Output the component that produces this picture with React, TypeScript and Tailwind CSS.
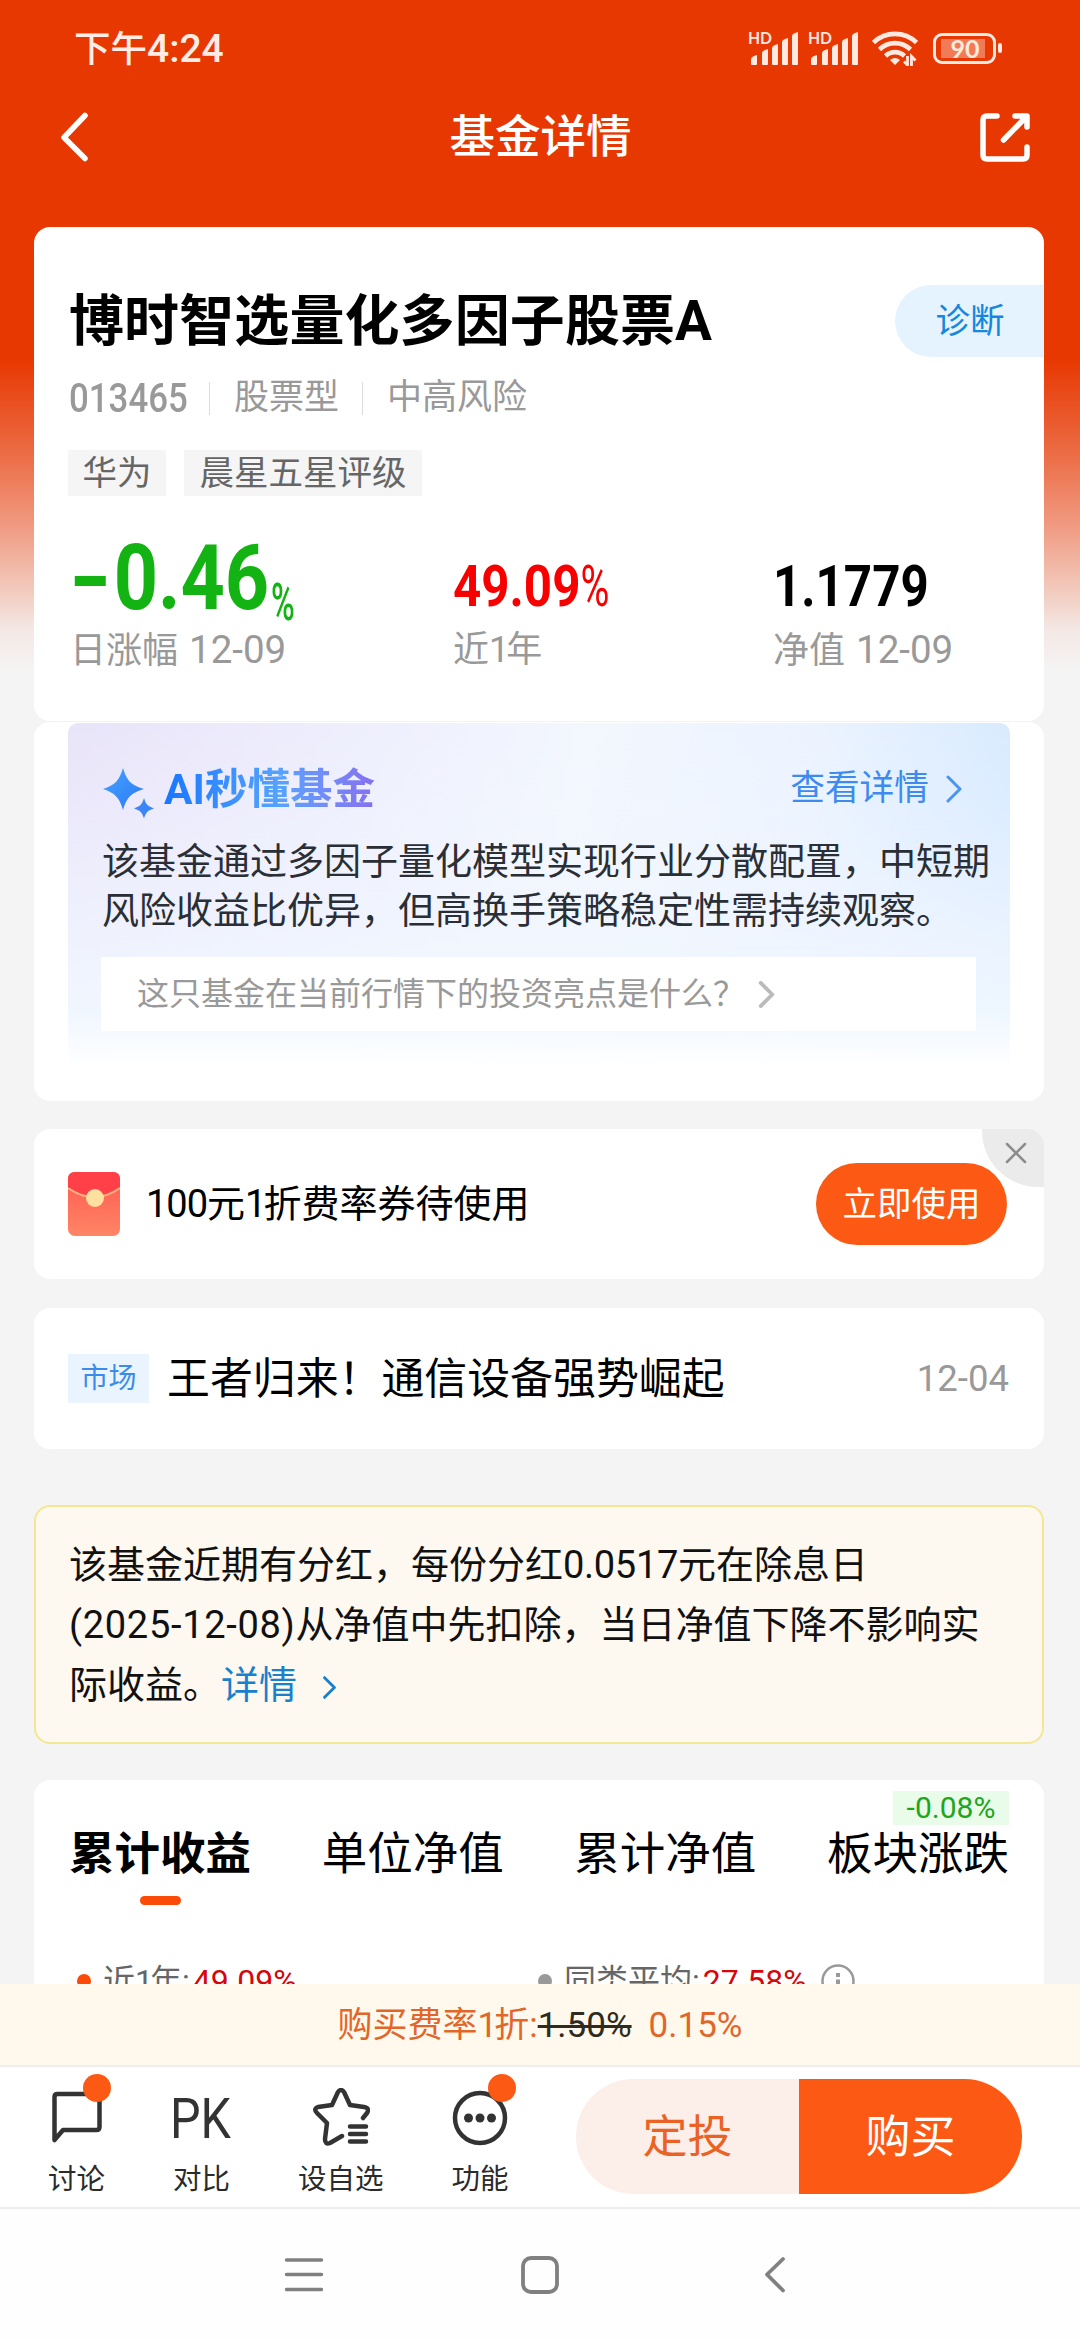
import type { ReactNode } from 'react';

const TABS = ['累计收益', '单位净值', '累计净值', '板块涨跌'];

function SignalIcon() {
  return (
    <svg className="overflow-visible" width="50" height="34" viewBox="0 0 50 34" fill="#ffe9e0">
      <text x="-1" y="13" fontSize="17" fontWeight="700" fontFamily="Lato" textLength="24" lengthAdjust="spacingAndGlyphs">
        HD
      </text>
      <path d="M2 33v-4q0-3 3-4l3-1v9q0 1-1 1H3q-1 0-1-1Z" />
      <path d="M13 33V22q0-2 3-3l3-1v15q0 1-1 1h-4q-1 0-1-1Z" />
      <path d="M23 33V17q0-2 3-3l3-1v20q0 1-1 1h-4q-1 0-1-1Z" />
      <path d="M33 33V11q0-2 3-3l3-1v26q0 1-1 1h-4q-1 0-1-1Z" />
      <path d="M43 33V5q0-2 3-3l3-1v32q0 1-1 1h-4q-1 0-1-1Z" />
    </svg>
  );
}

function WifiIcon() {
  return (
    <svg width="46" height="37" viewBox="0 0 46 37" fill="none" stroke="#ffe9e0" strokeWidth="4.6">
      <path d="M1.500 12.500a31 31 0 0 1 43 0" />
      <path d="M7.500 19.500a22 22 0 0 1 31 0" />
      <path d="M13.500 26a13.500 13.500 0 0 1 19 0" />
      <path d="M18 30q5-4 10 0l-5 5Z" fill="#ffe9e0" stroke="none" />
      <path d="M35.500 26v10M35.500 35l-3.500-3.500M39.500 36V26.500l4 4" strokeWidth="2.800" />
    </svg>
  );
}

function BatteryIcon() {
  return (
    <div className="flex items-center gap-[2px]">
      <div className="flex h-[31px] w-[63px] items-center rounded-[9px] border-[3px] border-[#ffe9e0] px-[5px]">
        <div className="flex h-[19px] w-[44px] items-center justify-center bg-[#f27b57]">
          <span className="pl-1 font-['Lato'] text-[25px] leading-none font-bold text-[#ffeadb]">90</span>
        </div>
      </div>
      <div className="h-[10px] w-[4px] rounded-sm bg-[#ffe9e0]" />
    </div>
  );
}

function Chevron({ className, width = 4 }: { className: string; width?: number }) {
  return (
    <svg className={className} viewBox="0 0 16 28" fill="none" stroke="currentColor" strokeWidth={width} strokeLinecap="round" strokeLinejoin="round">
      <path d="M2 2l12 12L2 26" />
    </svg>
  );
}

function ToolItem({ label, dot, children }: { label: string; dot?: boolean; children: ReactNode }) {
  return (
    <div className="flex flex-col items-center">
      <div className="relative mt-[21px] h-[58px]">
        {children}
        {dot && <span className="absolute -top-[14px] right-[-8px] size-[28px] rounded-full bg-[#fc5a14]" />}
      </div>
      <span className="mt-[14px] text-[28.500px] leading-[40px] whitespace-nowrap text-[#2b2b2b]">{label}</span>
    </div>
  );
}

function StatusBar() {
  return (
    <div className="flex h-[96px] items-center justify-between pr-[78px] pl-[74px]">
      <span className="pt-[2px] text-[36.500px] font-medium text-[#ffece4]">
        下午<span className="text-[39px]">4:24</span>
      </span>
      <div className="flex items-center">
        <SignalIcon />
        <span className="w-[10px]" />
        <SignalIcon />
        <span className="w-[13px]" />
        <WifiIcon />
        <span className="w-[15px]" />
        <BatteryIcon />
      </div>
    </div>
  );
}

function TitleBar() {
  return (
    <div className="flex h-[131px] items-start justify-between pt-[15px] pr-[50px] pl-[60px] text-white">
      <svg className="mt-[1px] h-[50px] w-[49px]" viewBox="0 0 49 50" fill="none" stroke="currentColor" strokeWidth="5.500" strokeLinecap="round" strokeLinejoin="round">
        <path d="M25 3.500L4 25.500l21 21" />
      </svg>
      <h1 className="mt-[2px] pr-[8px] text-[45.500px] leading-[50px] font-medium">基金详情</h1>
      <svg className="mt-[1px] h-[50px] w-[50px]" viewBox="0 0 50 50" fill="none" stroke="currentColor" strokeWidth="5.500" strokeLinecap="round" strokeLinejoin="round">
        <path d="M17 4H7q-4 0-4 4v35q0 4 4 4h36q4 0 4-4V35" />
        <path d="M35 4h12v11M46 5L23.500 28" />
      </svg>
    </div>
  );
}

function FundSummary() {
  return (
    <section className="h-[494px] rounded-[16px] bg-white">
      <div className="flex items-center justify-between pt-[58px]">
        <h2 className="pl-[35px] text-[55px] leading-[72px] font-bold tracking-[0.100px] text-black">
          博时智选量化多因子股票A
        </h2>
        <button type="button" className="h-[72px] w-[149px] rounded-l-full bg-[#e5f3ff] pl-px text-[34.500px] leading-[71px] text-[#1487e0]">
          诊断
        </button>
      </div>

      <div className="mt-[16px] flex h-[50px] items-center pl-[35px] text-[35px] leading-[50px] text-[#999]">
        <span className="w-[140px] origin-left scale-x-[0.850] text-[41px] font-medium">013465</span>
        <span className="h-[33px] w-px bg-[#ddd]" />
        <span className="w-[152px] pl-[24px]">股票型</span>
        <span className="h-[33px] w-px bg-[#ddd]" />
        <span className="pl-[24px]">中高风险</span>
      </div>

      <div className="mt-[27px] flex gap-[18px] pl-[34px] text-[34.500px] leading-[46px] text-[#666]">
        <span className="h-[46px] w-[98px] bg-[#f5f5f5] text-center">华为</span>
        <span className="h-[46px] w-[238px] bg-[#f5f5f5] text-center">晨星五星评级</span>
      </div>

      <div className="mt-[34px] flex pl-[38px]">
        <div className="w-[381px]">
          <div className="flex h-[96px] items-end text-[#12b312]">
            <span className="flex w-[199px] origin-left scale-x-[0.850] text-[91px] leading-[95px] font-bold whitespace-nowrap">
              <span className="-ml-[4px] w-[53px] shrink-0">
                <span className="inline-block origin-left scale-x-[1.450]">-</span>
              </span>
              <span>0.46</span>
            </span>
            <span className="origin-left scale-x-[0.620] pb-px text-[52px] leading-[44px] font-medium">%</span>
          </div>
          <div className="-ml-[2px] text-[36px] leading-[48px] text-[#999]">
            日涨幅<span className="pl-[11px] text-[38.500px]">12-09</span>
          </div>
        </div>
        <div className="w-[320px]">
          <div className="flex h-[96px] origin-left scale-x-[0.850] items-end text-[58px] leading-[79px] font-bold text-[#f80000]">
            49.09<span className="inline-block origin-left scale-x-[0.800] font-normal">%</span>
          </div>
          <div className="text-[36px] leading-[48px] text-[#999]">
            近<span className="tracking-[-3px]">1</span>年
          </div>
        </div>
        <div>
          <div className="flex h-[96px] origin-left scale-x-[0.850] items-end text-[58px] leading-[79px] font-bold text-black">
            1.1779
          </div>
          <div className="text-[36px] leading-[48px] text-[#999]">
            净值<span className="pl-[11px] text-[38.500px]">12-09</span>
          </div>
        </div>
      </div>
    </section>
  );
}

function AiCard() {
  return (
    <section className="h-[380px] rounded-[16px] border-t border-[#f2f2f2] bg-white px-[34px] pt-px">
      <div className="h-[344px] rounded-t-[10px] bg-[linear-gradient(to_bottom,rgba(243,248,255,0)_0%,rgba(243,248,255,0.200)_25%,rgba(241,246,255,0.700)_60%,rgba(241,248,255,0.900)_84%,white_100%),linear-gradient(100deg,#e9e4f9_0%,#eeeefd_28%,#f3f7fe_52%,#ebf3ff_75%,#d3e8ff_100%)] px-[34px]">
        <div className="flex h-[115px] items-center pt-[16px]">
          <svg className="mt-[9px] h-[52px] w-[54px]" viewBox="0 0 54 52">
            <defs>
              <linearGradient id="spark" x1="0" y1="0" x2="1" y2="1">
                <stop offset="0" stopColor="#46a4ff" />
                <stop offset="1" stopColor="#2c78f5" />
              </linearGradient>
            </defs>
            <path fill="url(#spark)" d="M21 1C25 14 29 18 42 22C29 26 25 30 21 43C17 30 13 26 1 22C13 18 17 14 21 1Z" />
            <path fill="#3a86f8" d="M42 31C44 38 46 39 52 41.500C46 43.500 44 45 42 51.500C40 45 38 43.500 32 41.500C38 39 40 38 42 31Z" />
          </svg>
          <h3 className="mt-[3px] ml-[8px] bg-gradient-to-r from-[#1677ff] via-[#55a3ff] via-55% to-[#8570f0] bg-clip-text text-[42.500px] leading-[60px] font-bold text-transparent">
            AI秒懂基金
          </h3>
          <a className="ml-auto text-[34.700px] text-[#3d8bef]">查看详情</a>
          <Chevron className="mr-[14px] ml-[17px] h-[28px] w-[16px] text-[#4a94f2]" width={3} />
        </div>
        <p className="text-[37px] leading-[49px] whitespace-nowrap text-[#2a2e35]">
          该基金通过多因子量化模型实现行业分散配置，中短期
          <br />
          风险收益比优异，但高换手策略稳定性需持续观察。
        </p>
        <div className="mt-[21px] -ml-px flex h-[74px] w-[875px] items-center bg-white pl-[36px] text-[32px] text-[#999]">
          这只基金在当前行情下的投资亮点是什么？
          <Chevron className="ml-[13px] h-[27px] w-[17px] text-[#bbb]" />
        </div>
      </div>
    </section>
  );
}

function CouponCard() {
  return (
    <section className="relative mt-[28px] flex h-[150px] items-center overflow-hidden rounded-[16px] bg-white pr-[37px] pl-[34px]">
      <svg className="h-[64px] w-[52px]" viewBox="0 0 52 64">
        <defs>
          <linearGradient id="packet" x1="0" y1="0" x2="0" y2="1">
            <stop offset="0" stopColor="#ff5a50" />
            <stop offset="1" stopColor="#ff8566" />
          </linearGradient>
        </defs>
        <rect width="52" height="64" rx="7" fill="url(#packet)" />
        <path d="M0 16V7q0-7 7-7h38q7 0 7 7v9q-26 18-52 0Z" fill="#ff4049" />
        <path d="M0 16q26 18 52 0" fill="none" stroke="#ffb27d" strokeWidth="2" />
        <circle cx="27" cy="26" r="9" fill="#ffe0a0" />
      </svg>
      <span className="ml-[26px] text-[38px] text-black">
        <span className="tracking-[-1px]">100</span>元<span className="tracking-[-3px]">1</span>折费率券待使用
      </span>
      <button type="button" className="ml-auto h-[82px] w-[191px] rounded-full bg-[#fc5a14] text-[34.500px] leading-[80px] text-white">
        立即使用
      </button>
      <span className="absolute top-0 right-0 flex h-[58px] w-[62px] items-center justify-center rounded-bl-[56px] bg-[#ebebeb] pb-[10px] pl-[6px]">
        <svg className="size-[22px]" viewBox="0 0 22 22" stroke="#8c8c8c" strokeWidth="2.500" strokeLinecap="round">
          <path d="M2 2l18 18M20 2L2 20" />
        </svg>
      </span>
    </section>
  );
}

function NewsCard() {
  return (
    <section className="mt-[29px] flex h-[141px] items-center rounded-[16px] bg-white pr-[35px] pl-[34px]">
      <span className="h-[49px] w-[81px] bg-[#e9f4ff] text-center text-[28px] leading-[49px] text-[#3b8cea]">市场</span>
      <span className="ml-[18px] pt-[2px] text-[42.900px] text-black">王者归来！通信设备强势崛起</span>
      <span className="ml-auto pt-px text-[36.500px] text-[#999]">12-04</span>
    </section>
  );
}

function DividendNotice() {
  return (
    <section className="mt-[56px] h-[239px] rounded-[16px] border-2 border-[#f3e793] bg-[#fdf8f0] pt-[28px] pl-[33px] text-[38px] leading-[60px] whitespace-nowrap text-[#111]">
      该基金近期有分红，每份分红<span className="tracking-[-0.300px]">0.0517</span>元在除息日
      <br />
      <span className="tracking-[0.700px]">(2025-12-08)</span>从净值中先扣除，当日净值下降不影响实
      <br />
      际收益。<a className="text-[#1a80cc]">详情</a>
      <Chevron className="ml-[23px] inline h-[23px] w-[19px] text-[#1a80cc]" width={3.500} />
    </section>
  );
}

function PerformanceCard() {
  return (
    <section className="mt-[36px] h-[400px] rounded-[16px] bg-white px-[35px] pt-[45px]">
      <div className="flex justify-between text-[45.500px] leading-[60px] text-black">
        {TABS.map((tab, i) => (
          <div key={tab} className="relative flex flex-col items-center">
            <span className={i === 0 ? 'font-bold' : 'font-normal'}>{tab}</span>
            {i === 0 && <span className="mt-[11px] h-[9px] w-[41px] rounded-full bg-[#fb4b06]" />}
            {i === TABS.length - 1 && (
              <span className="absolute -top-[34px] right-0 h-[34px] w-[116px] bg-[#e9fbe9] text-center text-[30px] leading-[34px] text-[#20a51c]">
                -0.08%
              </span>
            )}
          </div>
        ))}
      </div>
      <div className="mt-[51px] flex items-center text-[32px] leading-[50px] text-[#666]">
        <div className="flex w-[469px] items-center pl-[8px]">
          <span className="mr-[12px] size-[14px] rounded-full bg-[#fb4b06]" />
          近<span className="tracking-[-3px]">1</span>年:<span className="pl-[3px] text-[#d6060b]">49.09%</span>
        </div>
        <span className="mr-[12px] size-[14px] rounded-full bg-[#999]" />
        同类平均:<span className="pl-[3px] text-[#d6060b]">27.58%</span>
        <svg className="ml-[14px] size-[34px]" viewBox="0 0 34 34" fill="none" stroke="#999" strokeWidth="2.500">
          <circle cx="17" cy="17" r="15.500" />
          <path d="M17 9v4M17 15.500v11" strokeWidth="4" />
        </svg>
      </div>
    </section>
  );
}

function ActionBar() {
  return (
    <div className="flex h-[145px] justify-between border-t-2 border-b-2 border-[#eee] bg-white pr-[58px] pl-[48px]">
      <div className="flex gap-[68px]">
        <ToolItem label="讨论" dot>
          <svg className="h-[58px] w-[52px]" viewBox="0 0 52 58" fill="none" stroke="#333" strokeWidth="4.500" strokeLinejoin="round">
            <path d="M3.500 52V9q0-3 3-3h39q3 0 3 3v30q0 3-3 3H12Z" />
          </svg>
        </ToolItem>
        <ToolItem label="对比">
          <svg className="h-[58px] w-[56px] overflow-visible" viewBox="0 0 56 58" fill="#333">
            <text x="-4" y="49.500" fontSize="55" fontFamily="Roboto" textLength="61" lengthAdjust="spacingAndGlyphs">
              PK
            </text>
          </svg>
        </ToolItem>
        <ToolItem label="设自选">
          <svg className="h-[58px] w-[58px]" viewBox="0 0 58 58" fill="none" stroke="#333" strokeWidth="4.500" strokeLinecap="round" strokeLinejoin="round">
            <path d="M30 48l-12 7q-5 2-5-4l2-16L5 25q-4-4 1-6l14-2 6-13q3-4 6 0l6 13 14 2q6 1 3 6l-4 5" />
            <path d="M38 38.500h16M38 46h16M38 53.500h16" />
          </svg>
        </ToolItem>
        <ToolItem label="功能" dot>
          <svg className="h-[58px] w-[56px]" viewBox="0 0 56 58" fill="none" stroke="#333" strokeWidth="4.500">
            <circle cx="28" cy="30" r="25" />
            <g fill="#333" stroke="none">
              <circle cx="16.500" cy="30" r="4.500" />
              <circle cx="28" cy="30" r="4.500" />
              <circle cx="39.500" cy="30" r="4.500" />
            </g>
          </svg>
        </ToolItem>
      </div>
      <div className="mt-[12px] flex h-[115px] w-[446px] overflow-hidden rounded-full text-[45px] leading-[117px]">
        <button type="button" className="flex-1 bg-[#fceee9] text-[#ea6224]">定投</button>
        <button type="button" className="flex-1 bg-[#fc5a14] text-white">购买</button>
      </div>
    </div>
  );
}

function SystemNav() {
  return (
    <div className="flex h-[131px] items-start bg-[#fefefe] pt-[47px] pl-[284px] text-[#808080]">
      <svg className="h-[38px] w-[40px]" viewBox="0 0 40 38" stroke="currentColor" strokeWidth="3.500" strokeLinecap="round">
        <path d="M2.500 4h35M2.500 18.500h35M2.500 33.500h35" />
      </svg>
      <svg className="ml-[196px] h-[38px] w-[40px]" viewBox="0 0 40 38" fill="none" stroke="currentColor" strokeWidth="3.800">
        <rect x="3" y="2" width="34" height="34" rx="8" />
      </svg>
      <svg className="ml-[204px] h-[38px] w-[22px]" viewBox="0 0 22 38" fill="none" stroke="currentColor" strokeWidth="3.800" strokeLinecap="round" strokeLinejoin="round">
        <path d="M19 3L3 18.500l16 16" />
      </svg>
    </div>
  );
}

export default function App() {
  return (
    <div className="flex h-[2340px] w-[1080px] flex-col overflow-hidden bg-[#f4f4f4] font-[Roboto,'Noto_Sans_CJK_SC',sans-serif]">
      <main className="h-[1984px] shrink-0 overflow-hidden bg-[linear-gradient(to_bottom,#e83802_0px,#e83802_360px,#eb6a42_450px,#f0967c_520px,#f2cabd_590px,#f4e8e5_630px,#f4f4f4_670px)]">
        <StatusBar />
        <TitleBar />
        <div className="pr-[36px] pl-[34px]">
          <FundSummary />
          <AiCard />
          <CouponCard />
          <NewsCard />
          <DividendNotice />
          <PerformanceCard />
        </div>
      </main>
      <div className="flex h-[81px] shrink-0 items-center justify-center bg-[#fef9ec] pt-[3px] text-[35px] text-[#e2662a]">
        购买费率<span className="tracking-[-3px]">1</span>折:<span className="text-[#2f2b20] line-through">1.50%</span>
        <span className="pl-[17px]">0.15%</span>
      </div>
      <ActionBar />
      <SystemNav />
    </div>
  );
}
